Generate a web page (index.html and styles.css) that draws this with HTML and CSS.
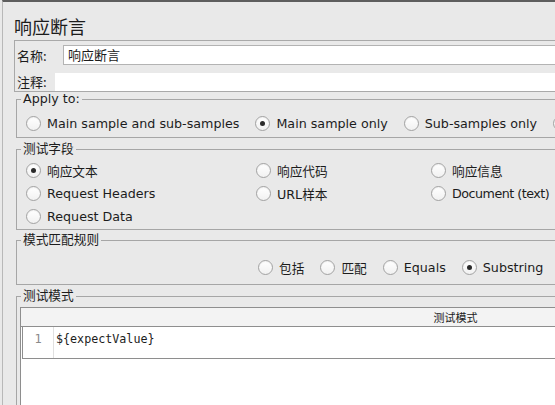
FILE: index.html
```html
<!DOCTYPE html>
<html lang="zh">
<head>
    <meta charset="UTF-8">
    <title>响应断言</title>
    <link rel="stylesheet" href="styles.css">
</head>
<body>
    <div class="frame">
        <div class="main">
            <div class="title">响应断言</div>

            <div class="name-box">
                <div class="name-row">
                    <span class="label name-label">名称:</span>
                    <div class="field">响应断言</div>
                </div>
                <div class="comment-row">
                    <span class="label">注释:</span>
                    <div class="field comment"></div>
                </div>
            </div>

            <fieldset class="group apply">
                <legend>Apply to:</legend>
                <div class="radio-row">
                    <label class="radio"><span class="dot"></span>Main sample and sub-samples</label>
                    <label class="radio on"><span class="dot"></span>Main sample only</label>
                    <label class="radio"><span class="dot"></span>Sub-samples only</label>
                    <label class="radio"><span class="dot"></span></label>
                </div>
            </fieldset>

            <fieldset class="group fields">
                <legend>测试字段</legend>
                <div class="field-grid">
                    <label class="radio on"><span class="dot"></span>响应文本</label>
                    <label class="radio"><span class="dot"></span>响应代码</label>
                    <label class="radio"><span class="dot"></span>响应信息</label>
                    <label class="radio"><span class="dot"></span>Request Headers</label>
                    <label class="radio"><span class="dot"></span>URL样本</label>
                    <label class="radio tight"><span class="dot"></span>Document (text)</label>
                    <label class="radio"><span class="dot"></span>Request Data</label>
                </div>
            </fieldset>

            <fieldset class="group rules">
                <legend>模式匹配规则</legend>
                <div class="radio-row rule-row">
                    <label class="radio"><span class="dot"></span>包括</label>
                    <label class="radio"><span class="dot"></span>匹配</label>
                    <label class="radio"><span class="dot"></span>Equals</label>
                    <label class="radio on"><span class="dot"></span>Substring</label>
                </div>
            </fieldset>

            <fieldset class="group patterns">
                <legend>测试模式</legend>
                <div class="table">
                    <div class="table-head">测试模式</div>
                    <div class="editor">
                        <div class="gutter">1</div>
                        <div class="code">${expectValue}</div>
                    </div>
                </div>
            </fieldset>
        </div>
    </div>
</body>
</html>
```

FILE: styles.css
```css
body {
    margin: 0;
    overflow: hidden;
    background-color: #e9e9e9;
    font-family: "DejaVu Sans", "Noto Sans CJK SC", sans-serif;
    font-size: 12.7px;
    color: #1c1c1c;
}

.frame {
    height: 405px;
    margin-left: 2px;
    border-top: 2px solid #5e5e5e;
    border-left: 1px solid #b8b8b8;
}

.main {
    width: 878px;
    margin-left: 11px;
}

.title {
    padding: 13px 0 3px;
    font-family: "Noto Sans CJK SC", sans-serif;
    font-size: 18px;
    line-height: 22px;
}

/* name / comment box */
.name-box {
    border: 1px solid #a9a9a9;
    padding: 4px 0 0 2px;
}

.name-row,
.comment-row {
    display: flex;
    align-items: center;
}

.comment-row {
    margin-top: 7px;
}

.label {
    width: 38px;
    font-family: "Noto Sans CJK SC", sans-serif;
    font-size: 13px;
}

.name-label {
    width: 46px;
}

.field {
    flex: 1;
    height: 20px;
    box-sizing: border-box;
    border: 1px solid #b3b3b3;
    background-color: #fff;
    padding-left: 4px;
    line-height: 18px;
    font-family: "Noto Sans CJK SC", sans-serif;
    font-size: 13px;
}

.comment {
    height: 18px;
    border: none;
}

/* titled groups */
.group {
    margin: 0 0 0 2px;
    padding: 0 0 0 4px;
    border: 1px solid #a6a6a6;
    min-width: 0;
}

.group legend {
    padding: 0 2px;
    line-height: 14px;
}

.fields {
    margin-top: 4px;
}

.rules {
    margin-top: 3px;
}

.patterns {
    margin-top: 4px;
}

.radio-row {
    display: flex;
    align-items: center;
    height: 20px;
    padding: 7px 0 4px 5px;
    white-space: nowrap;
}

.radio {
    display: inline-flex;
    align-items: center;
    gap: 6px;
    margin-right: 16px;
    white-space: nowrap;
}

.tight {
    letter-spacing: -0.5px;
}

.dot {
    position: relative;
    width: 15px;
    height: 15px;
    box-sizing: border-box;
    border: 1px solid #a2a2a2;
    border-radius: 50%;
    background: linear-gradient(#ffffff, #f1f1f1);
    box-shadow: inset 0 1px 1px rgba(0, 0, 0, 0.06);
}

.on .dot::after {
    content: "";
    position: absolute;
    left: 4px;
    top: 4px;
    width: 5px;
    height: 5px;
    border-radius: 50%;
    background-color: #2a2a2a;
}

.field-grid {
    display: grid;
    grid-template-columns: 230px 175px 1fr;
    grid-auto-rows: 23px;
    align-items: center;
    padding: 3px 0 1px 5px;
}

.rule-row {
    padding: 10px 0 7px 237px;
}

/* pattern table */
.table {
    margin: 4px 0 0 -1px;
    height: 120px;
    border: 1px solid #8e8e8e;
    border-bottom: none;
    background-color: #fff;
}

.table-head {
    height: 18px;
    background-color: #f3f3f3;
    border-bottom: 1px solid #8e8e8e;
    text-align: center;
    font-family: "Noto Sans CJK SC", sans-serif;
    font-size: 11px;
    line-height: 18px;
}

.editor {
    display: flex;
    height: 31px;
    margin-left: 1px;
    border-left: 1px solid #8e8e8e;
    border-bottom: 1px solid #8e8e8e;
}

.gutter {
    width: 30px;
    padding-top: 3px;
    border-right: 1px solid #e0e0e0;
    color: #8a8a8a;
    text-align: center;
    font-family: "DejaVu Sans Mono", monospace;
    font-size: 12px;
    line-height: 18px;
}

.code {
    padding: 3px 0 0 2px;
    font-family: "DejaVu Sans Mono", monospace;
    font-size: 11.7px;
    line-height: 18px;
}
```
